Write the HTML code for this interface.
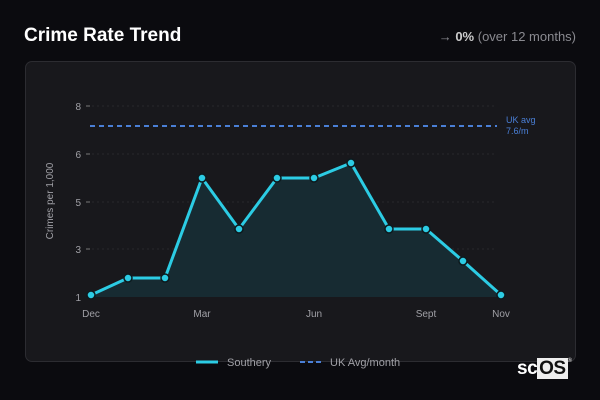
<!DOCTYPE html>
<html><head><style>
body{margin:0;width:600px;height:400px;background:#0b0b0f;font-family:"Liberation Sans",sans-serif;overflow:hidden;position:relative}
.t{position:absolute;left:24px;top:25px;font-size:19px;font-weight:bold;color:#fff}
.r{position:absolute;right:24px;top:29px;font-size:13px;color:#8a8a90}
.r b{color:#ccc}
.card{position:absolute;left:25px;top:61px;width:549px;height:299px;background:#18181c;border:1px solid #2c2c31;border-radius:7px}
svg{position:absolute;left:0;top:0}
.logo{position:absolute;left:517px;top:358px;font-size:19px;font-weight:bold;color:#fff;letter-spacing:-0.5px}
.logo span{background:#eee;color:#111;padding:0 2px}
.logo sup{font-size:6px;color:#ccc;vertical-align:top}
</style></head><body>
<div class="t">Crime Rate Trend</div>
<div class="r">→ <b>0%</b> (over 12 months)</div>
<div class="card"></div>
<svg width="600" height="400" font-family="Liberation Sans, sans-serif">
<g stroke="#28282d" stroke-dasharray="2 3" stroke-width="1">
<line x1="92" y1="106" x2="497" y2="106"/><line x1="92" y1="154" x2="497" y2="154"/>
<line x1="92" y1="202" x2="497" y2="202"/><line x1="92" y1="249" x2="497" y2="249"/>
</g>
<g stroke="#777" stroke-width="1"><line x1="86" y1="106" x2="90" y2="106"/><line x1="86" y1="154" x2="90" y2="154"/><line x1="86" y1="202" x2="90" y2="202"/><line x1="86" y1="249" x2="90" y2="249"/></g>
<g fill="#a0a0a6" font-size="10" text-anchor="end"><text x="81" y="110">8</text><text x="81" y="158">6</text><text x="81" y="206">5</text><text x="81" y="253">3</text><text x="81" y="301">1</text></g>
<text x="53" y="201" fill="#a0a0a6" font-size="10" text-anchor="middle" transform="rotate(-90 53 201)">Crimes per 1,000</text>
<g fill="#a0a0a6" font-size="10" text-anchor="middle"><text x="91" y="317">Dec</text><text x="202" y="317">Mar</text><text x="314" y="317">Jun</text><text x="426" y="317">Sept</text><text x="501" y="317">Nov</text></g>
<line x1="90" y1="126" x2="497" y2="126" stroke="#4a7fd6" stroke-width="2" stroke-dasharray="5 4"/>
<text x="506" y="123" fill="#4a7fd6" font-size="9">UK avg</text><text x="506" y="134" fill="#4a7fd6" font-size="9">7.6/m</text>
<polygon fill="#172b32" points="91,297 91,295 128,278 165,278 202,178 239,229 277,178 314,178 351,163 389,229 426,229 463,261 501,295 501,297"/>
<polyline fill="none" stroke="#2ccce4" stroke-width="3" stroke-linejoin="round" points="91,295 128,278 165,278 202,178 239,229 277,178 314,178 351,163 389,229 426,229 463,261 501,295"/>
<g fill="#2ccce4" stroke="#0d1a1e" stroke-width="1.5">
<circle cx="91" cy="295" r="4"/><circle cx="128" cy="278" r="4"/><circle cx="165" cy="278" r="4"/><circle cx="202" cy="178" r="4"/><circle cx="239" cy="229" r="4"/><circle cx="277" cy="178" r="4"/><circle cx="314" cy="178" r="4"/><circle cx="351" cy="163" r="4"/><circle cx="389" cy="229" r="4"/><circle cx="426" cy="229" r="4"/><circle cx="463" cy="261" r="4"/><circle cx="501" cy="295" r="4"/>
</g>
<line x1="196" y1="362" x2="218" y2="362" stroke="#2ccce4" stroke-width="3"/>
<text x="227" y="366" fill="#a0a0a6" font-size="11">Southery</text>
<line x1="300" y1="362" x2="322" y2="362" stroke="#4a7fd6" stroke-width="2" stroke-dasharray="5 3"/>
<text x="330" y="366" fill="#a0a0a6" font-size="11">UK Avg/month</text>
</svg>
<div class="logo">sc<span>OS</span><sup>®</sup></div>
</body></html>
